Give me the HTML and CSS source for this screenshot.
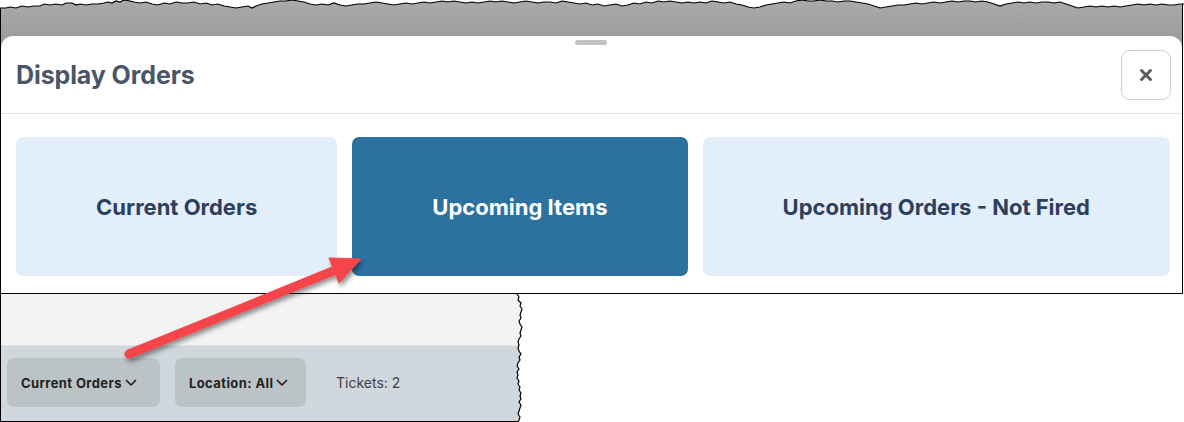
FILE: index.html
```html
<!DOCTYPE html>
<html lang="en">
<head>
<meta charset="utf-8">
<title>Display Orders</title>
<link rel="stylesheet" href="styles.css">
</head>
<body>
  <div class="capture">
    <section class="sheet">
      <div class="grabber"></div>
      <header class="sheet-header">
        <h1 class="sheet-title">Display Orders</h1>
        <button class="close-btn" aria-label="Close">
          <svg width="14" height="14" viewBox="0 0 14 14"><path d="M2.5 2.5 L11.5 11.5 M11.5 2.5 L2.5 11.5" stroke="#5a5a5a" stroke-width="3" stroke-linecap="round"/></svg>
        </button>
      </header>
      <div class="choices">
        <button class="choice">Current Orders</button>
        <button class="choice is-active">Upcoming Items</button>
        <button class="choice">Upcoming Orders - Not Fired</button>
      </div>
    </section>
  </div>

  <div class="lower">
    <div class="lower-blank"></div>
    <div class="toolbar">
      <button class="tool-btn tool-btn--orders">Current Orders
        <svg class="chev" width="12" height="8" viewBox="0 0 12 8"><path d="M1.5 1.5 L6 6 L10.5 1.5" fill="none" stroke="#222" stroke-width="1.7" stroke-linecap="round" stroke-linejoin="round"/></svg>
      </button>
      <button class="tool-btn tool-btn--location">Location: All
        <svg class="chev" width="12" height="8" viewBox="0 0 12 8"><path d="M1.5 1.5 L6 6 L10.5 1.5" fill="none" stroke="#222" stroke-width="1.7" stroke-linecap="round" stroke-linejoin="round"/></svg>
      </button>
      <span class="tickets">Tickets: 2</span>
    </div>
  </div>

  <!-- torn paper edge along the top of the upper capture -->
  <svg class="torn torn-top" width="1184" height="16" viewBox="0 0 1184 16">
    <path fill="#fff" d="M0,0 L0,8 6,8 10,7 16,8 22,6 28,7 34,6 40,6 44,4 50,5 56,4 62,5 66,3 72,3 76,5 80,4 86,5 92,4 98,4 104,3 108,2 112,3 116,1 120,2 124,0 130,1 134,2 140,3 146,2 152,4 158,5 164,3 170,4 176,2 182,3 188,3 194,2 200,4 206,3 212,5 218,4 224,6 230,7 236,8 242,7 248,6 252,8 256,6 262,4 268,3 274,2 280,1 286,1 292,0 298,1 304,2 310,4 316,5 322,4 328,5 334,3 340,5 346,6 352,5 358,4 364,4 370,3 376,2 382,3 388,4 394,5 400,4 406,3 412,4 418,3 424,2 430,3 436,2 442,1 448,2 454,1 460,2 466,3 472,2 478,3 484,2 490,1 496,2 502,1 508,2 514,3 520,2 526,1 532,2 538,3 544,2 550,2 556,3 562,1 568,2 574,3 580,4 586,3 592,5 598,4 604,6 610,5 616,4 622,6 628,5 634,3 640,4 646,2 652,3 658,1 664,2 670,1 676,2 682,3 688,2 694,3 700,2 706,3 712,1 718,2 724,3 730,2 736,4 742,5 748,7 754,8 760,7 766,5 772,4 778,3 784,2 790,3 796,1 802,0 808,1 814,1 820,0 826,1 832,1 838,2 844,1 850,1 856,2 862,3 868,4 874,6 880,8 886,7 892,6 898,5 904,5 910,4 916,3 922,4 928,3 934,2 940,3 946,2 952,1 958,2 964,1 970,1 976,2 982,1 988,2 994,4 1000,6 1006,4 1012,3 1018,2 1024,3 1030,2 1036,3 1042,2 1048,2 1054,3 1060,2 1066,4 1072,6 1078,8 1084,7 1090,6 1096,7 1102,6 1108,7 1114,6 1120,7 1126,6 1132,5 1138,4 1144,5 1150,4 1156,5 1162,4 1168,5 1174,5 1180,4 1184,4 L1184,0 Z"/>
    <polyline fill="none" stroke="#000" stroke-width="1.2" points="0,8 6,8 10,7 16,8 22,6 28,7 34,6 40,6 44,4 50,5 56,4 62,5 66,3 72,3 76,5 80,4 86,5 92,4 98,4 104,3 108,2 112,3 116,1 120,2 124,0 130,1 134,2 140,3 146,2 152,4 158,5 164,3 170,4 176,2 182,3 188,3 194,2 200,4 206,3 212,5 218,4 224,6 230,7 236,8 242,7 248,6 252,8 256,6 262,4 268,3 274,2 280,1 286,1 292,0 298,1 304,2 310,4 316,5 322,4 328,5 334,3 340,5 346,6 352,5 358,4 364,4 370,3 376,2 382,3 388,4 394,5 400,4 406,3 412,4 418,3 424,2 430,3 436,2 442,1 448,2 454,1 460,2 466,3 472,2 478,3 484,2 490,1 496,2 502,1 508,2 514,3 520,2 526,1 532,2 538,3 544,2 550,2 556,3 562,1 568,2 574,3 580,4 586,3 592,5 598,4 604,6 610,5 616,4 622,6 628,5 634,3 640,4 646,2 652,3 658,1 664,2 670,1 676,2 682,3 688,2 694,3 700,2 706,3 712,1 718,2 724,3 730,2 736,4 742,5 748,7 754,8 760,7 766,5 772,4 778,3 784,2 790,3 796,1 802,0 808,1 814,1 820,0 826,1 832,1 838,2 844,1 850,1 856,2 862,3 868,4 874,6 880,8 886,7 892,6 898,5 904,5 910,4 916,3 922,4 928,3 934,2 940,3 946,2 952,1 958,2 964,1 970,1 976,2 982,1 988,2 994,4 1000,6 1006,4 1012,3 1018,2 1024,3 1030,2 1036,3 1042,2 1048,2 1054,3 1060,2 1066,4 1072,6 1078,8 1084,7 1090,6 1096,7 1102,6 1108,7 1114,6 1120,7 1126,6 1132,5 1138,4 1144,5 1150,4 1156,5 1162,4 1168,5 1174,5 1180,4 1184,4"/>
  </svg>

  <!-- torn paper edge along the right of the lower capture -->
  <svg class="torn torn-right" width="80" height="128" viewBox="500 294 80 128">
    <path fill="#fff" d="M517,294 L519,297 518,300 521,303 520,306 522,309 521,312 520,315 521,318 519,321 520,324 522,327 521,330 520,333 521,336 519,339 518,342 519,345 518,348 519,351 521,354 519,357 520,360 518,363 517,366 519,369 517,372 518,375 517,378 519,381 518,384 520,387 519,390 521,393 520,396 521,399 519,402 521,405 520,408 519,411 518,414 520,417 519,420 518,422 L580,422 580,294 Z"/>
    <polyline fill="none" stroke="#000" stroke-width="1.2" points="517,294 519,297 518,300 521,303 520,306 522,309 521,312 520,315 521,318 519,321 520,324 522,327 521,330 520,333 521,336 519,339 518,342 519,345 518,348 519,351 521,354 519,357 520,360 518,363 517,366 519,369 517,372 518,375 517,378 519,381 518,384 520,387 519,390 521,393 520,396 521,399 519,402 521,405 520,408 519,411 518,414 520,417 519,420 518,422"/>
  </svg>

  <!-- callout arrow pointing at the selected view -->
  <svg class="callout" width="1184" height="422" viewBox="0 0 1184 422">
    <defs>
      <filter id="arrowShadow" x="-20%" y="-20%" width="140%" height="140%">
        <feDropShadow dx="2" dy="3" stdDeviation="2.5" flood-color="#000" flood-opacity="0.45"/>
      </filter>
    </defs>
    <g filter="url(#arrowShadow)" fill="#f4444c" stroke="#f4444c">
      <line x1="129" y1="354" x2="338" y2="269" stroke-width="9" stroke-linecap="round"/>
      <polygon points="361,259 339,283 329,258" stroke-width="1" stroke-linejoin="round"/>
    </g>
  </svg>
</body>
</html>
```

FILE: styles.css
```css
* {
  box-sizing: border-box;
}

html,
body {
  margin: 0;
  padding: 0;
}

body {
  position: relative;
  width: 1184px;
  height: 422px;
  overflow: hidden;
  background: #fff;
  font-family: Inter, "Noto Sans", "Liberation Sans", sans-serif;
}

button {
  font-family: inherit;
  cursor: pointer;
}

/* ---------- upper capture: bottom sheet over a dimmed page ---------- */
.capture {
  width: 1183px;
  height: 294px;
  padding-top: 36px;
  border-left: 1px solid #000;
  border-right: 1px solid #000;
  border-bottom: 1px solid #000;
  background: linear-gradient(#a9aaac, #9c9d9f 36px, #9c9d9f);
}

.sheet {
  position: relative;
  height: 100%;
  background: #fff;
  border-radius: 12px 12px 0 0;
}

.grabber {
  position: absolute;
  top: 4px;
  left: 50%;
  width: 32px;
  height: 5px;
  margin-left: -17px;
  border-radius: 3px;
  background: #c2c2c2;
}

.sheet-header {
  display: flex;
  align-items: center;
  justify-content: space-between;
  height: 78px;
  padding: 0 11px 0 15px;
  border-bottom: 1px solid #e4e4e4;
}

.sheet-title {
  margin: 0;
  font-size: 25px;
  font-weight: 700;
  color: #4a5568;
  letter-spacing: -0.1px;
}

.close-btn {
  display: flex;
  align-items: center;
  justify-content: center;
  width: 50px;
  height: 50px;
  padding: 0;
  border: 1px solid #cfcfcf;
  border-radius: 9px;
  background: #fff;
}

.choices {
  display: flex;
  gap: 15px;
  padding: 23px 12px 0 15px;
}

.choice {
  flex: 1 1 auto;
  height: 139px;
  padding: 0 20px;
  border: none;
  border-radius: 7px;
  background: #e2effb;
  color: #2e3f5c;
  font-size: 22px;
  font-weight: 700;
  letter-spacing: 0;
}

.choice.is-active {
  background: #2b72a1;
  color: #fff;
}

/* ---------- lower capture: list toolbar ---------- */
.lower {
  width: 540px;
  height: 128px;
  border-left: 1px solid #000;
  border-bottom: 1px solid #000;
}

.lower-blank {
  height: 51px;
  background: #f3f3f3;
}

.toolbar {
  display: flex;
  align-items: center;
  height: 76px;
  padding: 0 0 2px 6px;
  border-top: 1px solid #dfe3e5;
  background: #d0d8dd;
}

.tool-btn {
  display: flex;
  align-items: center;
  gap: 3px;
  height: 49px;
  padding: 0 0 0 14px;
  border: none;
  border-radius: 7px;
  background: #bcc3c6;
  color: #222;
  font-size: 13px;
  font-weight: 700;
  letter-spacing: 0.4px;
}

.tool-btn--orders {
  width: 153px;
  margin-right: 15px;
}

.tool-btn--location {
  width: 131px;
  margin-right: 30px;
}

.chev {
  margin-top: 1px;
}

.tickets {
  font-size: 14px;
  color: #3f3f3f;
}

/* ---------- overlays ---------- */
.torn {
  position: absolute;
  pointer-events: none;
}

.torn-top {
  top: 0;
  left: 0;
}

.torn-right {
  top: 294px;
  left: 500px;
}

.callout {
  position: absolute;
  top: 0;
  left: 0;
  pointer-events: none;
}
```
